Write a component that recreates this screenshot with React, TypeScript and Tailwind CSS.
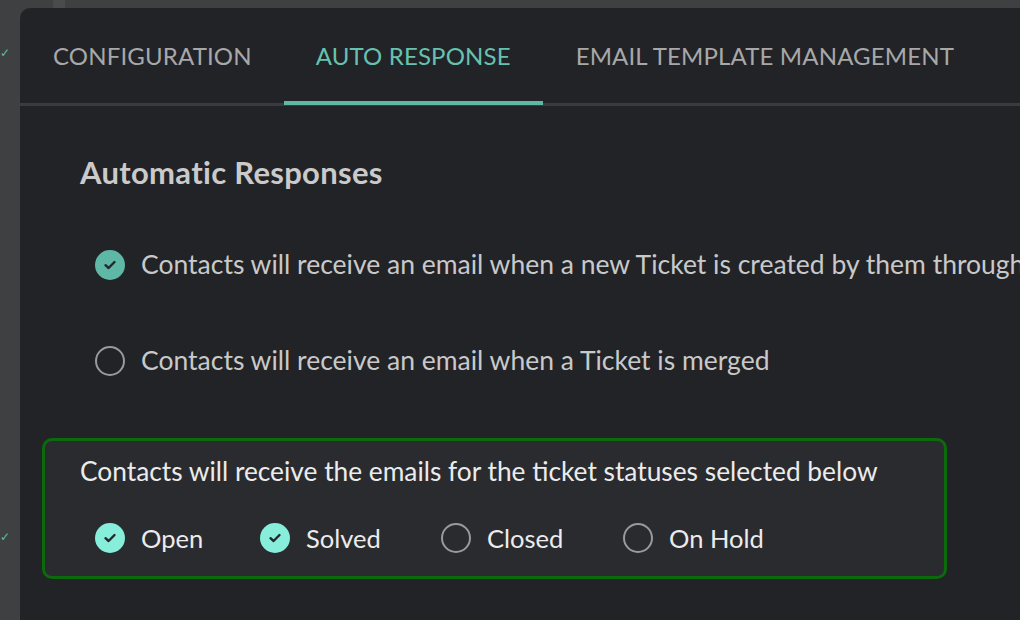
import React from "react";

const font = { fontFamily: "Lato, 'Noto Sans', sans-serif" };

function Check({ on, bright }: { on: boolean; bright?: boolean }) {
  if (!on) {
    return (
      <span className="w-[30px] h-[30px] rounded-full border-2 border-[#9a9a9a] shrink-0" />
    );
  }
  return (
    <span
      className={
        bright
          ? "w-[30px] h-[30px] rounded-full bg-[#86eedb] flex items-center justify-center shrink-0"
          : "w-[30px] h-[30px] rounded-full bg-[#5fb7a5] flex items-center justify-center shrink-0"
      }
    >
      <svg width="14" height="12" viewBox="0 0 14 12" fill="none">
        <path d="M2.5 6.2 L5.6 9 L11.5 3" stroke="#26272b" strokeWidth="2.4" strokeLinecap="round" strokeLinejoin="round" />
      </svg>
    </span>
  );
}

export default function App() {
  return (
    <div className="w-[1020px] h-[620px] bg-[#3f4042] overflow-hidden flex flex-col" style={font}>
      <div className="flex h-[8px] shrink-0">
        <div className="w-[53px]" />
        <div className="w-[12px] bg-[#4a4b4d]" />
      </div>
      <div className="flex flex-1 min-h-0">
        <div className="w-[20px] shrink-0 relative">
          <span className="absolute left-0 top-[36px] text-[#5fb7a5] text-[12px]">✓</span>
          <span className="absolute left-0 top-[520px] text-[#5fb7a5] text-[12px]">✓</span>
        </div>
        <div className="flex-1 bg-[#222327] rounded-tl-[10px] flex flex-col overflow-hidden">
          <div className="flex border-b-[3px] border-[#3a3b3e] h-[98px] pl-[33px] text-[24px] tracking-[0.15px]">
            <div className="flex items-center text-[#a8a8a8] mr-[32px]">CONFIGURATION</div>
            <div className="relative flex items-center text-[#66c2b0] px-[32px]">
              AUTO RESPONSE
              <span className="absolute left-0 right-0 bottom-[-2px] h-[4px] bg-[#5fb7a5]" />
            </div>
            <div className="flex items-center text-[#a8a8a8] pl-[33px]">EMAIL TEMPLATE MANAGEMENT</div>
          </div>
          <div className="pl-[60px] pt-[47px]">
            <h1 className="text-[31px] font-bold text-[#cacaca] leading-[38px] tracking-[0.3px]">Automatic Responses</h1>
          </div>
          <div className="pl-[75px] mt-[59px] flex flex-col gap-[66px]">
            <div className="flex items-center gap-[16px] text-[26.5px] text-[#c9c9c9] whitespace-nowrap h-[30px]">
              <Check on={true} />
              <span>Contacts will receive an email when a new Ticket is created by them through</span>
            </div>
            <div className="flex items-center gap-[16px] text-[26.5px] text-[#c9c9c9] whitespace-nowrap h-[30px]">
              <Check on={false} />
              <span>Contacts will receive an email when a Ticket is merged</span>
            </div>
          </div>
          <div className="ml-[22px] mt-[62px] w-[905px] h-[141px] border-[3px] border-[#0b6a0b] rounded-[10px] bg-[#2a2b2f] pl-[35px] pt-[15px]">
            <div className="text-[26.3px] text-[#ececec] leading-[30px] whitespace-nowrap">
              Contacts will receive the emails for the ticket statuses selected below
            </div>
            <div className="flex items-center mt-[33px] pl-[15px] text-[25.5px] text-[#ececec]">
              <div className="flex items-center gap-[16px] w-[165px]">
                <Check on={true} bright />
                <span>Open</span>
              </div>
              <div className="flex items-center gap-[16px] w-[181px]">
                <Check on={true} bright />
                <span>Solved</span>
              </div>
              <div className="flex items-center gap-[16px] w-[182px]">
                <Check on={false} />
                <span>Closed</span>
              </div>
              <div className="flex items-center gap-[16px]">
                <Check on={false} />
                <span>On Hold</span>
              </div>
            </div>
          </div>
        </div>
      </div>
    </div>
  );
}
